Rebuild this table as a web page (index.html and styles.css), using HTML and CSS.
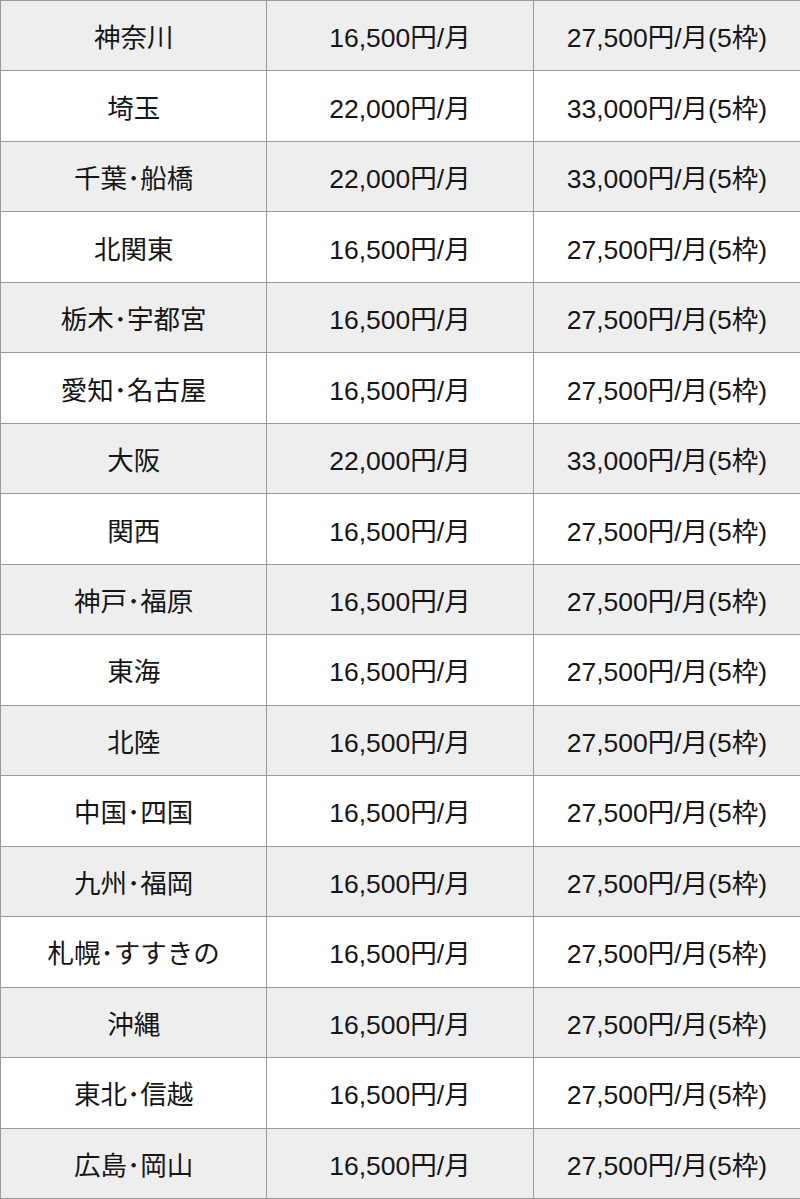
FILE: index.html
```html
<!DOCTYPE html>
<html lang="ja">
<head>
<meta charset="utf-8">
<link rel="stylesheet" href="styles.css">
</head>
<body>
<div class="table">
  <div class="cell alt">神奈川</div><div class="cell alt">16,500円/月</div><div class="cell alt last">27,500円/月(5枠)</div>
  <div class="cell">埼玉</div><div class="cell">22,000円/月</div><div class="cell last">33,000円/月(5枠)</div>
  <div class="cell alt">千葉･船橋</div><div class="cell alt">22,000円/月</div><div class="cell alt last">33,000円/月(5枠)</div>
  <div class="cell">北関東</div><div class="cell">16,500円/月</div><div class="cell last">27,500円/月(5枠)</div>
  <div class="cell alt">栃木･宇都宮</div><div class="cell alt">16,500円/月</div><div class="cell alt last">27,500円/月(5枠)</div>
  <div class="cell">愛知･名古屋</div><div class="cell">16,500円/月</div><div class="cell last">27,500円/月(5枠)</div>
  <div class="cell alt">大阪</div><div class="cell alt">22,000円/月</div><div class="cell alt last">33,000円/月(5枠)</div>
  <div class="cell">関西</div><div class="cell">16,500円/月</div><div class="cell last">27,500円/月(5枠)</div>
  <div class="cell alt">神戸･福原</div><div class="cell alt">16,500円/月</div><div class="cell alt last">27,500円/月(5枠)</div>
  <div class="cell">東海</div><div class="cell">16,500円/月</div><div class="cell last">27,500円/月(5枠)</div>
  <div class="cell alt">北陸</div><div class="cell alt">16,500円/月</div><div class="cell alt last">27,500円/月(5枠)</div>
  <div class="cell">中国･四国</div><div class="cell">16,500円/月</div><div class="cell last">27,500円/月(5枠)</div>
  <div class="cell alt">九州･福岡</div><div class="cell alt">16,500円/月</div><div class="cell alt last">27,500円/月(5枠)</div>
  <div class="cell">札幌･すすきの</div><div class="cell">16,500円/月</div><div class="cell last">27,500円/月(5枠)</div>
  <div class="cell alt">沖縄</div><div class="cell alt">16,500円/月</div><div class="cell alt last">27,500円/月(5枠)</div>
  <div class="cell">東北･信越</div><div class="cell">16,500円/月</div><div class="cell last">27,500円/月(5枠)</div>
  <div class="cell alt">広島･岡山</div><div class="cell alt">16,500円/月</div><div class="cell alt last">27,500円/月(5枠)</div>
</div>
</body>
</html>
```

FILE: styles.css
```css
html, body {
  margin: 0;
  padding: 0;
  background: #ffffff;
}

.table {
  width: 800px;
  height: 1199px;
  box-sizing: border-box;
  border-top: 1px solid #9a9a9a;
  border-left: 1px solid #9a9a9a;
  display: grid;
  grid-template-columns: 1fr 1fr 1fr;
  grid-template-rows: repeat(17, 1fr);
  font-family: "Liberation Sans", "Noto Sans CJK JP", sans-serif;
  font-size: 26.5px;
  color: #161616;
}

.cell {
  display: flex;
  align-items: center;
  justify-content: center;
  border-right: 1px solid #9a9a9a;
  border-bottom: 1px solid #9a9a9a;
  background: #ffffff;
  white-space: nowrap;
}

.cell.alt {
  background: #eeeeee;
}

.cell.last {
  border-right: none;
}
```
